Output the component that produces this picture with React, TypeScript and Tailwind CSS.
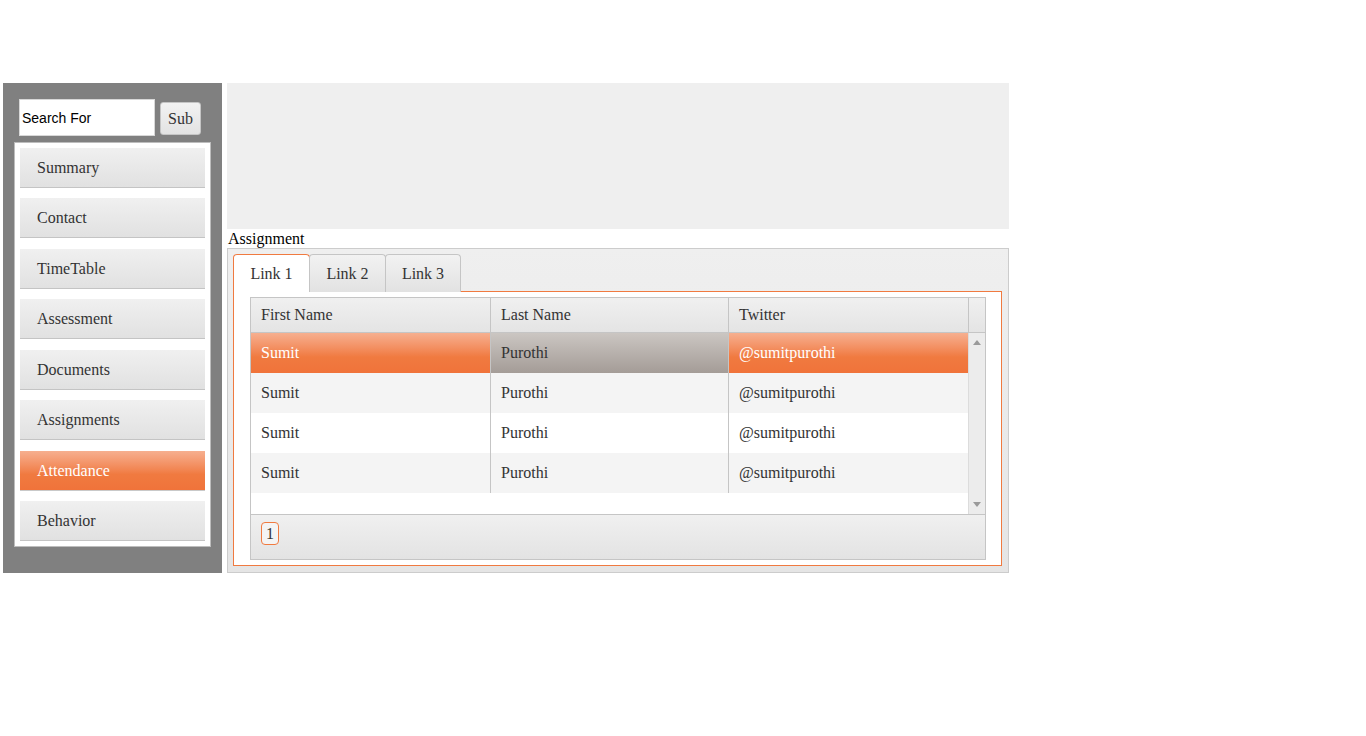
import { useState } from "react";

const menu = [
	"Summary",
	"Contact",
	"TimeTable",
	"Assessment",
	"Documents",
	"Assignments",
	"Attendance",
	"Behavior",
];

const rows = [
	{ first: "Sumit", last: "Purothi", twitter: "@sumitpurothi" },
	{ first: "Sumit", last: "Purothi", twitter: "@sumitpurothi" },
	{ first: "Sumit", last: "Purothi", twitter: "@sumitpurothi" },
	{ first: "Sumit", last: "Purothi", twitter: "@sumitpurothi" },
];

const serif = "font-['Liberation_Serif',serif]";

function Sidebar() {
	const [active, setActive] = useState("Attendance");

	return (
		<div className="w-[219px] h-[490px] bg-[#808080] shrink-0 pt-4 px-[11px]">
			<div className="flex items-center ml-[5px] h-[37px]">
				<input
					defaultValue="Search For"
					className="w-[136px] h-[37px] bg-white border border-[#d8d8d8] px-[2px] text-[14px] text-black font-['Liberation_Sans',sans-serif] outline-none"
				/>
				<button
					className={`ml-[5px] mt-[2px] w-[41px] h-[33px] rounded-[3px] border border-[#c5c5c5] bg-gradient-to-b from-[#f2f2f2] to-[#e3e3e3] text-[16px] text-[#333] ${serif}`}
				>
					Sub
				</button>
			</div>
			<div className="mt-[6px] bg-white border border-[#bdbdbd] p-[5px]">
				{menu.map((item, i) => {
					const on = item === active;
					return (
						<div
							key={item}
							onClick={() => setActive(item)}
							className={`h-[40px] flex items-center pl-[17px] text-[16px] border-b ${serif} ${
								i < menu.length - 1 ? (i % 2 === 0 ? "mb-[10px]" : "mb-[11px]") : ""
							} ${
								on
									? "bg-gradient-to-b from-[#f6af8f] via-[#f07a40] via-60% to-[#f0733a] text-white border-[#c9c9c9]"
									: "bg-gradient-to-b from-[#f0f0f0] to-[#e1e1e1] text-[#333] border-[#c4c4c4]"
							}`}
						>
							{item}
						</div>
					);
				})}
			</div>
		</div>
	);
}

function ScrollArrow({ up }: { up?: boolean }) {
	return (
		<svg width="8" height="5" viewBox="0 0 8 5" className="mx-auto">
			<path d={up ? "M4 0 L8 5 L0 5 Z" : "M0 0 L8 0 L4 5 Z"} fill="#9a9a9a" />
		</svg>
	);
}

function Grid() {
	const cell = "px-[10px] flex items-center text-[16px]";
	return (
		<div className={`border border-[#c5c5c5] ${serif} text-[#333]`}>
			<div className="flex h-[35px] border-b border-[#c5c5c5] bg-gradient-to-b from-[#f0f0f0] to-[#e4e4e4]">
				<div className={`${cell} w-[240px] border-r border-[#c5c5c5]`}>First Name</div>
				<div className={`${cell} w-[238px] border-r border-[#c5c5c5]`}>Last Name</div>
				<div className={`${cell} w-[240px] border-r border-[#c5c5c5]`}>Twitter</div>
				<div className="flex-1" />
			</div>
			<div className="flex h-[181px]">
				<div className="w-[718px] bg-white">
					{rows.map((r, i) => {
						const selected = i === 0;
						const stripe = i % 2 === 1 ? "bg-[#f4f4f4]" : "bg-white";
						const orange =
							"bg-gradient-to-b from-[#f6af8f] via-[#f07a40] via-60% to-[#f0733a] text-white";
						return (
							<div key={i} className={`flex h-[40px] ${selected ? "" : stripe}`}>
								<div className={`${cell} w-[240px] border-r border-[#c5c5c5] ${selected ? orange : ""}`}>
									{r.first}
								</div>
								<div
									className={`${cell} w-[238px] border-r border-[#c5c5c5] ${
										selected ? "bg-gradient-to-b from-[#cbc6c2] to-[#a49c97]" : ""
									}`}
								>
									{r.last}
								</div>
								<div className={`${cell} flex-1 ${selected ? orange : ""}`}>{r.twitter}</div>
							</div>
						);
					})}
				</div>
				<div className="w-[17px] bg-[#ececec] border-l border-[#dcdcdc] flex flex-col justify-between py-[7px]">
					<ScrollArrow up />
					<ScrollArrow />
				</div>
			</div>
			<div className="h-[45px] border-t border-[#c5c5c5] bg-gradient-to-b from-[#f0f0f0] to-[#e3e3e3] flex items-start pt-[7px] pl-[10px]">
				<span className="w-[18px] h-[23px] flex items-center justify-center rounded-[4px] border border-[#f07a40] text-[16px] text-[#333] bg-[#f4f4f4]">
					1
				</span>
			</div>
		</div>
	);
}

function Tabs() {
	const [tab, setTab] = useState(0);
	const tabs = [
		{ label: "Link 1", w: "w-[77px]" },
		{ label: "Link 2", w: "w-[77px]" },
		{ label: "Link 3", w: "w-[76px]" },
	];

	return (
		<div className="border border-[#cccccc] bg-gradient-to-b from-[#efefef] to-[#e5e5e5] pt-[5px] pl-[5px] pr-[6px] pb-[6px]">
			<div className={`flex h-[37px] ${serif}`}>
				{tabs.map((t, i) => (
					<button
						key={t.label}
						onClick={() => setTab(i)}
						className={`${t.w} h-[38px] text-[16px] text-[#333] rounded-t-[4px] border border-b-0 relative z-10 ${
							i === tab
								? "bg-white border-[#f07a40]"
								: "bg-gradient-to-b from-[#f2f2f2] to-[#e2e2e2] border-[#c5c5c5] h-[37px]"
						} ${i > 0 ? "-ml-px" : ""}`}
					>
						{t.label}
					</button>
				))}
			</div>
			<div className="border border-[#f07a40] bg-white pt-[5px] pl-4 pr-[15px] pb-[5px]">
				<Grid />
			</div>
		</div>
	);
}

export default function App() {
	return (
		<div className="min-h-screen bg-white pt-[83px] pl-[3px]">
			<div className="flex gap-[5px]">
				<Sidebar />
				<div className="w-[782px]">
					<div className="h-[146px] bg-[#efefef]" />
					<div className={`h-[19px] leading-[19px] text-[16px] text-black pl-px ${serif}`}>Assignment</div>
					<Tabs />
				</div>
			</div>
		</div>
	);
}
